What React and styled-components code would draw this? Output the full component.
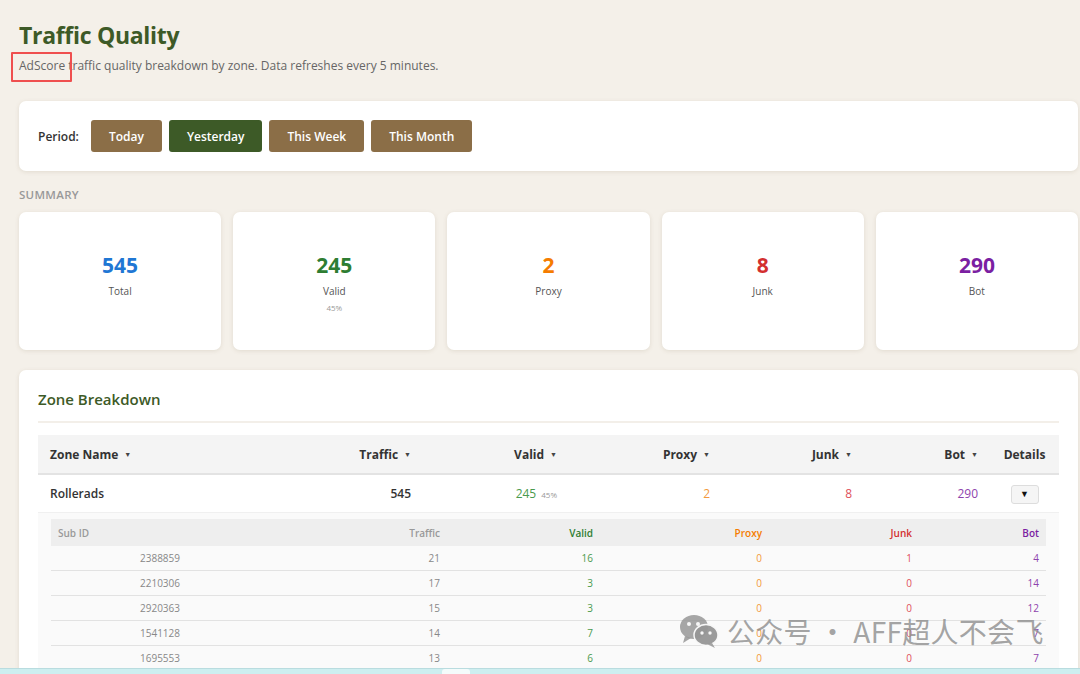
import React from "react";
import styled, { createGlobalStyle } from "styled-components";

const Global = createGlobalStyle`
  html, body { margin: 0; padding: 0; background: #f4f0e9; }
  body { font-family: "Open Sans", "Noto Sans", sans-serif; color: #333; overflow: hidden; }
  * { box-sizing: border-box; }
`;

const Page = styled.div`
  position: relative;
  width: 1080px;
  height: 674px;
  overflow: hidden;
  padding: 18px 2px 0 19px;
`;

const Title = styled.h1`
  margin: 0;
  font-size: 23px;
  line-height: 34px;
  font-weight: 700;
  color: #3d5a27;
  letter-spacing: -0.3px;
`;

const Subtitle = styled.p`
  margin: 5px 0 0;
  font-size: 12px;
  line-height: 18px;
  color: #666;
`;

const Card = styled.section`
  background: #fff;
  border-radius: 7px;
  box-shadow: 0 1px 4px rgba(120, 100, 70, 0.15);
`;

const PeriodCard = styled(Card)`
  margin-top: 26px;
  height: 70px;
  padding: 0 19px;
  display: flex;
  align-items: center;
  gap: 7px;
`;

const PeriodLabel = styled.span`
  font-size: 12px;
  font-weight: 600;
  color: #333;
  margin-right: 5px;
`;

const PeriodButton = styled.button`
  height: 32px;
  padding: 0 ${(p) => p.$px || 18}px;
  border: none;
  border-radius: 3px;
  background: ${(p) => (p.$active ? "#3d5a27" : "#8b6e47")};
  color: #fff;
  font-family: inherit;
  font-size: 12px;
  font-weight: 600;
  cursor: pointer;
`;

const SectionLabel = styled.div`
  margin-top: 17px;
  font-size: 11.5px;
  line-height: 14px;
  font-weight: 600;
  color: #999;
  text-transform: uppercase;
  letter-spacing: 0.3px;
`;

const SummaryGrid = styled.div`
  margin-top: 10px;
  display: grid;
  grid-template-columns: repeat(5, 1fr);
  gap: 12px;
`;

const SummaryCard = styled(Card)`
  height: 138px;
  padding-top: 41px;
  display: flex;
  flex-direction: column;
  align-items: center;
`;

const SummaryNum = styled.div`
  font-size: 21px;
  line-height: 24px;
  font-weight: 700;
  color: ${(p) => p.$color};
`;

const SummaryName = styled.div`
  margin-top: 7px;
  font-size: 10px;
  line-height: 14px;
  color: #555;
`;

const SummaryPct = styled.div`
  margin-top: 5px;
  font-size: 8px;
  line-height: 10px;
  color: #999;
`;

const ZoneCard = styled(Card)`
  margin-top: 20px;
  padding: 17px 19px 0;
  height: 400px;
`;

const ZoneTitle = styled.h2`
  margin: 0;
  font-size: 15px;
  line-height: 24px;
  font-weight: 600;
  color: #3d5a27;
  padding-bottom: 10px;
  border-bottom: 2px solid #f3efe9;
`;

const mainCols = "239px 146px 146px 153px 142px 126px 69px";
const subCols = "218px 178px 153px 169px 150px 127px";

const Table = styled.div`
  margin-top: 12px;
`;

const HeadRow = styled.div`
  display: grid;
  grid-template-columns: ${mainCols};
  height: 40px;
  align-items: center;
  background: #f4f4f4;
  border-bottom: 2px solid #e3e3e3;
`;

const HeadCell = styled.div`
  padding: 0 12px;
  font-size: 12px;
  font-weight: 700;
  color: #333;
  text-align: ${(p) => p.$align || "right"};
  white-space: nowrap;
`;

const Caret = styled.span`
  font-size: 7px;
  margin-left: 6px;
  vertical-align: 2px;
  color: #444;
`;

const BodyRow = styled.div`
  display: grid;
  grid-template-columns: ${mainCols};
  height: 38px;
  align-items: center;
  border-bottom: 1px solid #f0f0f0;
`;

const Cell = styled.div`
  padding: 0 12px;
  font-size: 12px;
  color: ${(p) => p.$color || "#333"};
  font-weight: ${(p) => p.$weight || 400};
  text-align: ${(p) => p.$align || "right"};
  white-space: nowrap;
`;

const Pct = styled.span`
  font-size: 8px;
  color: #999;
  margin-left: 5px;
`;

const DetailsBtn = styled.button`
  width: 28px;
  height: 19px;
  border: 1px solid #ddd;
  border-radius: 3px;
  background: #f5f5f5;
  font-size: 9px;
  line-height: 1;
  color: #111;
  padding: 0;
  cursor: pointer;
`;

const DetailWrap = styled.div`
  background: #fafafa;
  padding: 6px 13px 0;
`;

const SubHead = styled.div`
  display: grid;
  grid-template-columns: ${subCols};
  height: 27px;
  align-items: center;
  background: #eeeeee;
`;

const SubHeadCell = styled.div`
  padding: 0 7px;
  font-size: 10px;
  font-weight: 600;
  color: ${(p) => p.$color || "#999"};
  text-align: ${(p) => p.$align || "right"};
`;

const SubRow = styled.div`
  display: grid;
  grid-template-columns: ${subCols};
  height: 25px;
  align-items: center;
  border-bottom: 1px solid #e2e2e2;
`;

const SubCell = styled.div`
  padding: 0 7px;
  font-size: 10px;
  color: ${(p) => p.$color || "#888"};
  text-align: ${(p) => p.$align || "right"};
`;

const Annotation = styled.div`
  position: absolute;
  left: 11px;
  top: 52px;
  width: 61px;
  height: 30px;
  border: 2px solid #ef4f4f;
  border-radius: 1px;
`;

const Watermark = styled.div`
  position: absolute;
  left: 679px;
  top: 612px;
  display: flex;
  align-items: center;
  gap: 8px;
  color: rgba(140, 140, 140, 0.8);
  font-family: "Noto Sans CJK SC", "Noto Sans", sans-serif;
  font-size: 28px;
  line-height: 38px;
  letter-spacing: 0.3px;
  pointer-events: none;
`;

const BottomBar = styled.div`
  position: absolute;
  left: 0;
  right: 0;
  bottom: 0;
  height: 6px;
  background: #cdeef0;
  border-top: 1px solid #b9dcdf;
`;

const BarTab = styled.div`
  position: absolute;
  left: 442px;
  bottom: 0;
  width: 28px;
  height: 5px;
  background: #f4fbfb;
  border-radius: 3px 3px 0 0;
`;

const COLORS = {
  total: "#1f77d4",
  valid: "#2e7d32",
  proxy: "#f57c00",
  junk: "#d32f2f",
  bot: "#7b1fa2",
};

const VAL = {
  valid: "#4a9a4e",
  proxy: "#f39a3c",
  junk: "#e0505a",
  bot: "#8e44ad",
};

const summary = [
  { n: 545, label: "Total", color: COLORS.total },
  { n: 245, label: "Valid", color: COLORS.valid, pct: "45%" },
  { n: 2, label: "Proxy", color: COLORS.proxy },
  { n: 8, label: "Junk", color: COLORS.junk },
  { n: 290, label: "Bot", color: COLORS.bot },
];

const subRows = [
  ["2388859", 21, 16, 0, 1, 4],
  ["2210306", 17, 3, 0, 0, 14],
  ["2920363", 15, 3, 0, 0, 12],
  ["1541128", 14, 7, 0, 0, 7],
  ["1695553", 13, 6, 0, 0, 7],
];

function WeChatIcon() {
  return (
    <svg width="40" height="36" viewBox="0 0 40 36" fill="rgba(150,150,150,0.85)">
      <ellipse cx="15" cy="14" rx="14" ry="12" />
      <path d="M6 23 L4 30 L12 25 Z" />
      <ellipse cx="27" cy="22" rx="12" ry="10.5" fill="rgba(150,150,150,0.95)" stroke="#f7f7f7" strokeWidth="1.5" />
      <path d="M33 30 L36 35 L28 31 Z" />
      <circle cx="10" cy="11" r="2" fill="#f7f7f7" />
      <circle cx="19" cy="11" r="2" fill="#f7f7f7" />
      <circle cx="23" cy="20" r="1.7" fill="#f7f7f7" />
      <circle cx="31" cy="20" r="1.7" fill="#f7f7f7" />
    </svg>
  );
}

export default function App() {
  return (
    <>
      <Global />
      <Page>
        <Title>Traffic Quality</Title>
        <Subtitle>AdScore traffic quality breakdown by zone. Data refreshes every 5 minutes.</Subtitle>

        <PeriodCard>
          <PeriodLabel>Period:</PeriodLabel>
          <PeriodButton $px={18}>Today</PeriodButton>
          <PeriodButton $px={18} $active>Yesterday</PeriodButton>
          <PeriodButton $px={18}>This Week</PeriodButton>
          <PeriodButton $px={18}>This Month</PeriodButton>
        </PeriodCard>

        <SectionLabel>Summary</SectionLabel>
        <SummaryGrid>
          {summary.map((s) => (
            <SummaryCard key={s.label}>
              <SummaryNum $color={s.color}>{s.n}</SummaryNum>
              <SummaryName>{s.label}</SummaryName>
              {s.pct && <SummaryPct>{s.pct}</SummaryPct>}
            </SummaryCard>
          ))}
        </SummaryGrid>

        <ZoneCard>
          <ZoneTitle>Zone Breakdown</ZoneTitle>
          <Table>
            <HeadRow>
              <HeadCell $align="left">Zone Name<Caret>▼</Caret></HeadCell>
              <HeadCell>Traffic<Caret>▼</Caret></HeadCell>
              <HeadCell>Valid<Caret>▼</Caret></HeadCell>
              <HeadCell>Proxy<Caret>▼</Caret></HeadCell>
              <HeadCell>Junk<Caret>▼</Caret></HeadCell>
              <HeadCell>Bot<Caret>▼</Caret></HeadCell>
              <HeadCell $align="center">Details</HeadCell>
            </HeadRow>
            <BodyRow>
              <Cell $align="left" $weight={600}>Rollerads</Cell>
              <Cell $weight={600}>545</Cell>
              <Cell $color={VAL.valid}>245<Pct>45%</Pct></Cell>
              <Cell $color={VAL.proxy}>2</Cell>
              <Cell $color={VAL.junk}>8</Cell>
              <Cell $color={VAL.bot}>290</Cell>
              <Cell $align="center"><DetailsBtn>▼</DetailsBtn></Cell>
            </BodyRow>
            <DetailWrap>
              <SubHead>
                <SubHeadCell $align="left">Sub ID</SubHeadCell>
                <SubHeadCell>Traffic</SubHeadCell>
                <SubHeadCell $color={COLORS.valid}>Valid</SubHeadCell>
                <SubHeadCell $color={COLORS.proxy}>Proxy</SubHeadCell>
                <SubHeadCell $color={COLORS.junk}>Junk</SubHeadCell>
                <SubHeadCell $color={COLORS.bot}>Bot</SubHeadCell>
              </SubHead>
              {subRows.map((r) => (
                <SubRow key={r[0]}>
                  <SubCell $align="center">{r[0]}</SubCell>
                  <SubCell>{r[1]}</SubCell>
                  <SubCell $color={VAL.valid}>{r[2]}</SubCell>
                  <SubCell $color={VAL.proxy}>{r[3]}</SubCell>
                  <SubCell $color={VAL.junk}>{r[4]}</SubCell>
                  <SubCell $color={VAL.bot}>{r[5]}</SubCell>
                </SubRow>
              ))}
            </DetailWrap>
          </Table>
        </ZoneCard>

        <Annotation />
        <Watermark>
          <WeChatIcon />
          <span>公众号 · AFF超人不会飞</span>
        </Watermark>
        <BottomBar>
          <BarTab />
        </BottomBar>
      </Page>
    </>
  );
}
